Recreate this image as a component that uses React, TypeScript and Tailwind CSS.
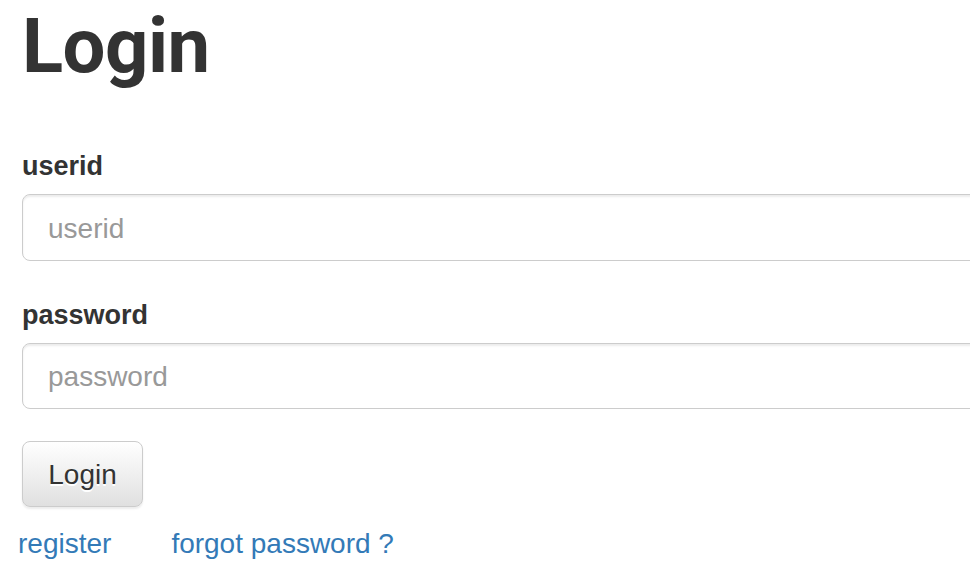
import React from "react";

export default function App() {
  return (
    <div className="w-[970px] h-[572px] overflow-hidden bg-white text-[#333]" style={{ fontFamily: '"Liberation Sans", Arial, sans-serif' }}>
      <div className="pl-[22px]">
        <h1 className="pt-[4px] text-[76px] leading-[84px] font-bold tracking-[-0.5px]" style={{ fontFamily: 'Roboto, "Liberation Sans", sans-serif' }}>
          Login
        </h1>
        <form className="mt-[58px] flex flex-col" onSubmit={(e) => e.preventDefault()}>
          <label className="text-[27px] leading-[40px] font-bold">userid</label>
          <input
            className="mt-[8px] w-[1100px] h-[67px] rounded-[8px] border border-[#ccc] pl-[25px] pt-[2px] text-[28px] text-[#555] placeholder:text-[#999] shadow-[inset_0_2px_2px_rgba(0,0,0,0.075)] outline-none"
            placeholder="userid"
          />
          <label className="mt-[34px] text-[27px] leading-[40px] font-bold">password</label>
          <input
            type="password"
            className="mt-[8px] w-[1100px] h-[66px] rounded-[8px] border border-[#ccc] pl-[25px] pt-[2px] text-[28px] text-[#555] placeholder:text-[#999] shadow-[inset_0_2px_2px_rgba(0,0,0,0.075)] outline-none"
            placeholder="password"
          />
          <div className="mt-[32px]">
            <button
              type="submit"
              className="w-[121px] h-[66px] rounded-[8px] border border-[#ccc] bg-gradient-to-b from-white to-[#e0e0e0] pt-[2px] text-[28px] text-[#333] [text-shadow:0_2px_0_#fff] shadow-[inset_0_2px_0_rgba(255,255,255,0.15),0_2px_2px_rgba(0,0,0,0.075)]"
            >
              Login
            </button>
          </div>
        </form>
        <div className="mt-[17px] -ml-[4px] flex text-[28px] leading-[40px] text-[#337ab7]">
          <a href="#">register</a>
          <a href="#" className="ml-[60px]">forgot password ?</a>
        </div>
      </div>
    </div>
  );
}
